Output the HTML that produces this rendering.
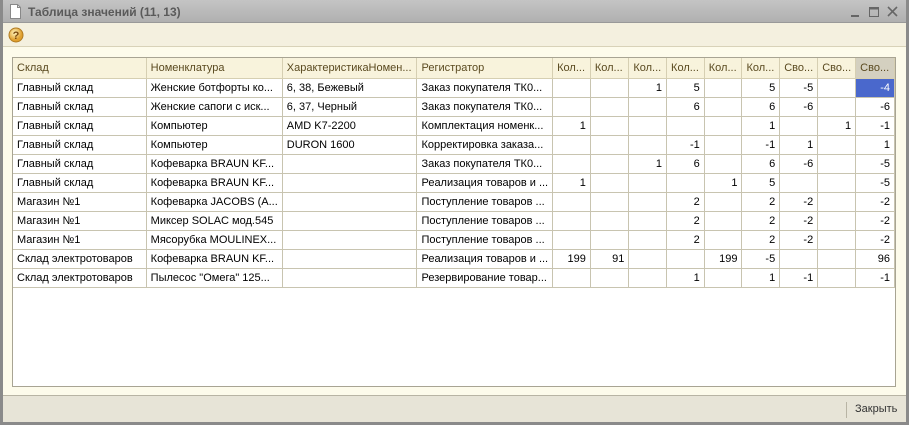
<!DOCTYPE html>
<html><head><meta charset="utf-8"><style>
*{margin:0;padding:0;box-sizing:border-box}
body{width:909px;height:425px;overflow:hidden;background:#8a8a8a;font-family:"Liberation Sans",sans-serif;font-size:11px;position:relative}
#win{position:absolute;left:3px;top:0;width:903px;height:422px;background:#fdfbeb}
#title{position:absolute;left:0;top:0;width:903px;height:23px;background:linear-gradient(#c4c4c4,#b0b0b0);border-bottom:1px solid #999}
#title .t{position:absolute;left:25px;top:5px;font-weight:bold;color:#5a5a5a;font-size:12px}
#tb{position:absolute;left:0;top:23px;width:903px;height:24px;background:#f4f0df;border-bottom:1px solid #d8d2b8}
#grid{position:absolute;left:9px;top:57px;width:884px;height:330px;background:#fff;border:1px solid #a8a493;overflow:hidden}
table{border-collapse:collapse;table-layout:fixed;position:absolute;left:0;top:0}
td{height:19px;border-right:1px solid #c8c4b0;border-bottom:1px solid #c8c4b0;padding:0 4px;white-space:nowrap;overflow:hidden;color:#000}
tr.h td{height:20px;background:#f8f3dc;color:#5a4a20;border-color:#d6cfb2}
tr.h td.sel{background:#d4d0c0}
td.n{text-align:right}
td.b{background:#4a68cc;color:#fff}
#bot{position:absolute;left:0;top:395px;width:903px;height:27px;background:#e7e4d7;border-top:1px solid #b8b4a4}
</style></head><body>
<div id="win">
<div id="title">
<svg style="position:absolute;left:6px;top:4px" width="13" height="15"><path d="M1.5 .5h7l3 3v11h-10z" fill="#fff" stroke="#888"/><path d="M8.5 .5v3h3" fill="none" stroke="#888"/></svg>
<span class="t">Таблица значений (11, 13)</span>
<svg style="position:absolute;left:846px;top:6px" width="52" height="12"><path d="M2 10h8" stroke="#666" stroke-width="2"/><rect x="20.5" y="1.5" width="9" height="9" fill="none" stroke="#666"/><rect x="20.5" y="1.5" width="9" height="2" fill="#666"/><path d="M39 1l9 9M48 1l-9 9" stroke="#666" stroke-width="1.6"/></svg>
</div>
<div id="tb"><svg style="position:absolute;left:5px;top:4px" width="16" height="16"><defs><radialGradient id="g" cx=".4" cy=".35"><stop offset="0" stop-color="#fff6c0"/><stop offset="1" stop-color="#e0a030"/></radialGradient></defs><circle cx="8" cy="8" r="7" fill="url(#g)" stroke="#b07a20"/><text x="8" y="12" font-size="11" text-anchor="middle" fill="#7a4a10" font-family="Liberation Sans" font-weight="bold">?</text></svg></div>
<div id="grid"><table>
<colgroup><col style="width:136px"><col style="width:134px"><col style="width:135px"><col style="width:135px"><col style="width:38px"><col style="width:39px"><col style="width:38px"><col style="width:38px"><col style="width:38px"><col style="width:38px"><col style="width:38px"><col style="width:38px"><col style="width:39px"></colgroup>
<tr class="h"><td>Склад</td><td>Номенклатура</td><td>ХарактеристикаНомен...</td><td>Регистратор</td><td>Кол...</td><td>Кол...</td><td>Кол...</td><td>Кол...</td><td>Кол...</td><td>Кол...</td><td>Сво...</td><td>Сво...</td><td class="sel">Сво...</td></tr>
<tr><td>Главный склад</td><td>Женские ботфорты ко...</td><td>6, 38, Бежевый</td><td>Заказ покупателя ТК0...</td><td></td><td></td><td class="n">1</td><td class="n">5</td><td></td><td class="n">5</td><td class="n">-5</td><td></td><td class="n b">-4</td></tr>
<tr><td>Главный склад</td><td>Женские сапоги с иск...</td><td>6, 37, Черный</td><td>Заказ покупателя ТК0...</td><td></td><td></td><td></td><td class="n">6</td><td></td><td class="n">6</td><td class="n">-6</td><td></td><td class="n">-6</td></tr>
<tr><td>Главный склад</td><td>Компьютер</td><td>AMD K7-2200</td><td>Комплектация номенк...</td><td class="n">1</td><td></td><td></td><td></td><td></td><td class="n">1</td><td></td><td class="n">1</td><td class="n">-1</td></tr>
<tr><td>Главный склад</td><td>Компьютер</td><td>DURON 1600</td><td>Корректировка заказа...</td><td></td><td></td><td></td><td class="n">-1</td><td></td><td class="n">-1</td><td class="n">1</td><td></td><td class="n">1</td></tr>
<tr><td>Главный склад</td><td>Кофеварка BRAUN KF...</td><td></td><td>Заказ покупателя ТК0...</td><td></td><td></td><td class="n">1</td><td class="n">6</td><td></td><td class="n">6</td><td class="n">-6</td><td></td><td class="n">-5</td></tr>
<tr><td>Главный склад</td><td>Кофеварка BRAUN KF...</td><td></td><td>Реализация товаров и ...</td><td class="n">1</td><td></td><td></td><td></td><td class="n">1</td><td class="n">5</td><td></td><td></td><td class="n">-5</td></tr>
<tr><td>Магазин №1</td><td>Кофеварка JACOBS (A...</td><td></td><td>Поступление товаров ...</td><td></td><td></td><td></td><td class="n">2</td><td></td><td class="n">2</td><td class="n">-2</td><td></td><td class="n">-2</td></tr>
<tr><td>Магазин №1</td><td>Миксер SOLAC мод.545</td><td></td><td>Поступление товаров ...</td><td></td><td></td><td></td><td class="n">2</td><td></td><td class="n">2</td><td class="n">-2</td><td></td><td class="n">-2</td></tr>
<tr><td>Магазин №1</td><td>Мясорубка MOULINEX...</td><td></td><td>Поступление товаров ...</td><td></td><td></td><td></td><td class="n">2</td><td></td><td class="n">2</td><td class="n">-2</td><td></td><td class="n">-2</td></tr>
<tr><td>Склад электротоваров</td><td>Кофеварка BRAUN KF...</td><td></td><td>Реализация товаров и ...</td><td class="n">199</td><td class="n">91</td><td></td><td></td><td class="n">199</td><td class="n">-5</td><td></td><td></td><td class="n">96</td></tr>
<tr><td>Склад электротоваров</td><td>Пылесос "Омега" 125...</td><td></td><td>Резервирование товар...</td><td></td><td></td><td></td><td class="n">1</td><td></td><td class="n">1</td><td class="n">-1</td><td></td><td class="n">-1</td></tr>
</table></div>
<div id="bot"><div style="position:absolute;left:843px;top:6px;width:1px;height:16px;background:#b8b4a4"></div><span style="position:absolute;left:852px;top:7px;color:#333;font-size:11px">Закрыть</span></div>
</div>
</body></html>
